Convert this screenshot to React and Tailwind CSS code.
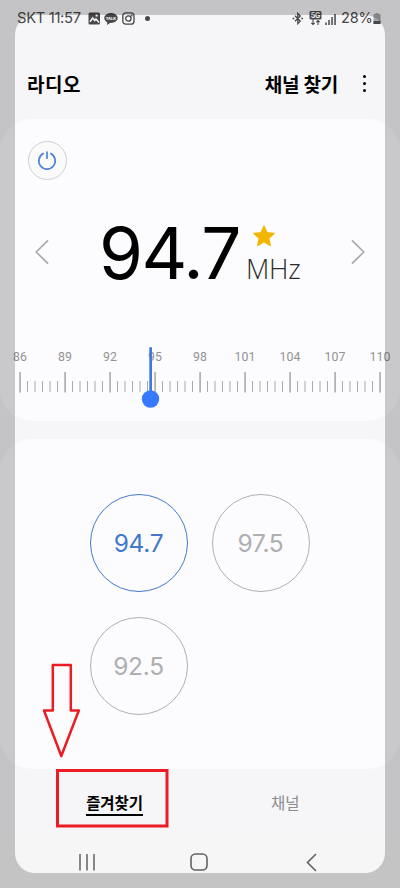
import React, { useState } from 'react';

const MIN = 86;
const MAX = 110;
const STEP = 0.5;

const favorites = ['94.7', '97.5', '92.5'];

const freqToX = (f) => 20 + (f - MIN) * 15;

function StatusBar() {
  return (
    <div className="flex h-[37px] items-center pl-[17px] text-[#48484a] font-['Inter','Liberation_Sans',sans-serif]">
      <span className="w-[71px] text-[14.8px] leading-none tracking-[-0.35px] whitespace-nowrap">SKT 11:57</span>
      <svg width="13" height="13" viewBox="0 0 13 13" className="shrink-0">
        <rect x="0.5" y="0.5" width="11.5" height="12" rx="1.5" fill="#48484a" />
        <path d="M2 9.8 4.7 6l2 2.5L8 7l3 3.5" fill="none" stroke="#f6f6f8" strokeWidth="1.5" />
        <rect x="7.6" y="2.5" width="2" height="2" fill="#f6f6f8" />
      </svg>
      <svg width="14" height="14" viewBox="0 0 14 14" className="ml-[3px] shrink-0">
        <path d="M7 1C3.2 1 .3 3.2 .3 6c0 1.9 1.2 3.4 3 4.2L2.9 13l3.2-2.1c4.1.3 7.6-1.9 7.6-4.9 0-2.8-2.9-5-6.7-5z" fill="#48484a" />
        <text x="7" y="7.7" textAnchor="middle" fontSize="3.9" fontWeight="800" fill="#f6f6f8">TALK</text>
      </svg>
      <svg width="13" height="13" viewBox="0 0 13 13" className="ml-[4px] shrink-0" fill="none" stroke="#48484a" strokeWidth="1.3">
        <rect x="0.8" y="0.8" width="11.2" height="11.4" rx="3" />
        <circle cx="6.4" cy="6.5" r="2.7" />
        <circle cx="9.6" cy="3.5" r="0.4" />
      </svg>
      <span className="ml-[10px] size-[5px] rounded-full bg-[#48484a]" />
      <svg width="12" height="13" viewBox="0 0 12 13" className="ml-[142px] shrink-0" fill="none" stroke="#48484a" strokeWidth="1.3">
        <path d="M3 3.7 8.3 9 5.8 11.6V1.4L8.3 4 3 9.3" />
        <path d="M.6 6.500h1.700M9.300 6.500H11" strokeWidth="1.7" />
      </svg>
      <svg width="13" height="15" viewBox="0 0 13 15" className="ml-[5px] shrink-0">
        <rect x="0.5" y="0" width="12" height="8.5" rx="1.5" fill="#48484a" />
        <text x="6.5" y="6.8" textAnchor="middle" fontSize="7" fontWeight="700" fill="#f6f6f8">5G</text>
        <path d="M4 8v5.500M2.300 11.800 4 13.500l1.700-1.700M9 14V9.500M7.300 11.200 9 9.500l1.700 1.700" fill="none" stroke="#48484a" strokeWidth="1.1" />
      </svg>
      <svg width="12" height="12" viewBox="0 0 12 12" className="ml-[3px] shrink-0" fill="#48484a">
        <path d="M.3 9.500h1.500V12H.3zM3.300 7h1.500v5H3.300zM6.300 4h1.500v8H6.300zM9.300 1h1.500v11H9.300z" />
      </svg>
      <span className="ml-[4px] w-[32px] text-[14.5px] leading-none tracking-[-0.2px]">28%</span>
      <svg width="9" height="11" viewBox="0 0 9 11" className="shrink-0">
        <path d="M2.500 0h3v1h2v10h-7V1h2z" fill="#a5a5a7" />
        <path d="M.5 8h7v3h-7z" fill="#48484a" />
      </svg>
    </div>
  );
}

function Dial({ value }) {
  const ticks = [];
  for (let f = MIN; f <= MAX; f += STEP) ticks.push(f);
  const x = freqToX(value);

  return (
    <svg width="400" height="70" viewBox="0 0 400 70" className="block font-['Roboto',sans-serif]">
      {ticks.map(f => {
        const major = (f - MIN) % 3 === 0;
        return (
          <g key={f}>
            <rect x={freqToX(f) - (major ? 0.8 : 0.5)} y={major ? 27 : 36} width={major ? 1.8 : 1} height={major ? 20.5 : 11} fill={major ? '#b3b3b4' : '#aaaaab'} />
            {major && <text x={freqToX(f)} y="16" textAnchor="middle" fontSize="12.3" letterSpacing="0.1" fill="#929293">{f}</text>}
          </g>
        );
      })}
      <rect x={x - 1.2} y="2" width="2.7" height="48" rx="1.3" fill="#4079df" />
      <circle cx={x} cy="54" r="8.7" fill="#387aff" />
    </svg>
  );
}

function Chevron({ flip }) {
  return (
    <svg width="14" height="26" viewBox="0 0 14 26" fill="none" stroke="#a9a9aa" strokeWidth="1.7" strokeLinecap="round" strokeLinejoin="round" className={flip ? 'rotate-180' : ''}>
      <path d="M12.500 1.800 1.200 13l11.300 11.200" />
    </svg>
  );
}

function Tuner({ freq }) {
  return (
    <section className="flex h-[302px] flex-col rounded-[32px] bg-[#fcfcfe]">
      <button className="mt-[22px] ml-[28px] flex size-[39px] items-center justify-center rounded-full border border-[#d0d0d1] bg-[#fafafb]">
        <svg width="20" height="20" viewBox="0 0 20 20" fill="none" stroke="#4c83d9" strokeWidth="1.7" strokeLinecap="round" className="mr-[1px]">
          <path d="M6.300 2.600a8.200 8.200 0 1 0 7.400 0M10 1v6.200" />
        </svg>
      </button>
      <div className="mt-[39px] flex h-[66px] items-center pl-[35px]">
        <button><Chevron /></button>
        <span className="mt-[2px] ml-[50px] w-[145px] font-['Inter',sans-serif] text-[71px] leading-[66px] font-normal tracking-[-1.6px] whitespace-nowrap text-black">{freq}</span>
        <div className="flex h-[66px] w-[107px] flex-col pl-[2px]">
          <svg width="24" height="24" viewBox="0 0 24 24" className="mt-[5px] ml-[6px]" fill="#f2b705" stroke="#f2b705" strokeWidth="1.5" strokeLinejoin="round">
            <path d="m12 2.200 2.900 6.500 7.100.8-5.300 4.800 1.500 7-6.200-3.600-6.200 3.600 1.500-7L2 9.500l7.100-.8z" />
          </svg>
          <span className="mt-[8px] font-['Open_Sans',sans-serif] text-[27px] leading-[26px] font-light tracking-[-0.3px] text-[#2c2c2d]">MHz</span>
        </div>
        <button><Chevron flip /></button>
      </div>
      <div className="mt-[60px]"><Dial value={Number(freq)} /></div>
    </section>
  );
}

export default function App() {
  const [freq, setFreq] = useState('94.7');

  return (
    <div className="relative flex h-[888px] w-[400px] flex-col overflow-hidden bg-[#f6f6f8] font-['Noto_Sans_CJK_KR',sans-serif]">
      <StatusBar />
      <header className="flex h-[82px] items-center pt-[10px] pr-[34px] pl-[27px] text-[19px] leading-none font-bold text-black">
        <h1 className="tracking-[0.5px]">라디오</h1>
        <button className="ml-auto tracking-[-0.2px]">채널 찾기</button>
        <button className="ml-[25px] flex flex-col gap-[4px]">
          <span className="size-[3px] rounded-full bg-black" />
          <span className="size-[3px] rounded-full bg-black" />
          <span className="size-[3px] rounded-full bg-black" />
        </button>
      </header>

      <Tuner freq={freq} />

      <section className="mt-[18px] h-[330px] rounded-[32px] bg-[#fcfcfe] pt-[55px] pl-[90px]">
        <div className="grid w-[220px] grid-cols-[98px_98px] gap-x-[24px] gap-y-[24.5px]">
          {favorites.map(f => (
            <button key={f} onClick={() => setFreq(f)} className={`flex size-[98px] items-center justify-center rounded-full border pt-px pr-[1px] font-['Inter',sans-serif] text-[24.5px] tracking-[-0.3px] ${f === freq ? 'border-[#4279ca] text-[#4279ca]' : 'border-[#afafb0] text-[#afafb0]'}`}>{f}</button>
          ))}
        </div>
      </section>

      <nav className="flex h-[67px] items-start pt-[23px] pl-[86px] text-[15.5px] leading-[20px]">
        <button className="w-[57px] border-b-[2.5px] border-black pb-[2px] font-bold tracking-[-0.1px] whitespace-nowrap text-black">즐겨찾기</button>
        <button className="ml-[128px] tracking-[-0.1px] text-[#8c8c8e]">채널</button>
      </nav>

      <footer className="flex h-[52px] items-center bg-[#f6f6f6] pl-[78px]">
        <svg width="18" height="18" viewBox="0 0 18 18" stroke="#6b6b6c" strokeWidth="1.6">
          <path d="M2 1v16.500M9 1v16.500M16 1v16.500" />
        </svg>
        <svg width="18" height="18" viewBox="0 0 18 18" className="ml-[94px]" fill="none" stroke="#626263" strokeWidth="1.6">
          <rect x="1" y="1" width="16" height="16" rx="4.5" />
        </svg>
        <svg width="11" height="19" viewBox="0 0 11 19" className="ml-[98px]" fill="none" stroke="#626263" strokeWidth="1.6">
          <path d="M10 1 1.500 9.500 10 18" />
        </svg>
      </footer>

      {/* dimmed frame around the screen */}
      <div className="pointer-events-none absolute inset-[15px] rounded-[20px] shadow-[0_0_0_60px_rgba(0,0,0,0.2)]" />

      {/* callout pointing at the favorites tab */}
      <svg width="130" height="170" viewBox="0 0 130 170" className="pointer-events-none absolute top-[660px] left-[40px]" fill="none" stroke="#ea1c24">
        <path d="M12.800 5h18v45.500h8L21.300 96 4 50.500h8.800z" strokeWidth="2.5" strokeLinejoin="round" />
        <rect x="17.5" y="110.5" width="109.5" height="55.5" strokeWidth="3" />
      </svg>
    </div>
  );
}
